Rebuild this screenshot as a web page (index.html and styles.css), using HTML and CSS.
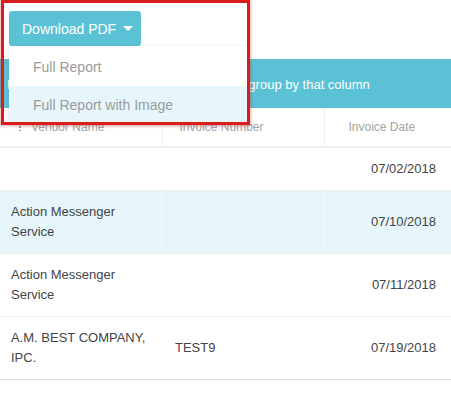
FILE: index.html
```html
<!DOCTYPE html>
<html>
<head>
<meta charset="utf-8">
<link rel="stylesheet" href="styles.css">
</head>
<body>
<div class="page">
  <div class="toolbar">
    <div class="dropdown">
      <button class="btn">Download PDF<span class="caret"></span></button>
      <ul class="menu">
        <li class="menu-item">Full Report</li>
        <li class="menu-item active">Full Report with Image</li>
      </ul>
    </div>
  </div>
  <div class="group-bar">Drag a column header and drop it here to group by that column</div>
  <table class="grid">
    <colgroup><col class="c1"><col class="c2"><col class="c3"></colgroup>
    <thead>
      <tr>
        <th class="h1"><span class="handle"></span>Vendor Name</th>
        <th class="h2">Invoice Number</th>
        <th class="h3">Invoice Date</th>
      </tr>
    </thead>
    <tbody>
      <tr><td class="d1"></td><td class="d2"></td><td class="d3">07/02/2018</td></tr>
      <tr class="alt"><td class="d1">Action Messenger Service</td><td class="d2"></td><td class="d3">07/10/2018</td></tr>
      <tr><td class="d1">Action Messenger Service</td><td class="d2"></td><td class="d3">07/11/2018</td></tr>
      <tr class="last"><td class="d1">A.M. BEST COMPANY, IPC.</td><td class="d2">TEST9</td><td class="d3">07/19/2018</td></tr>
    </tbody>
  </table>
  <div class="highlight"></div>
</div>
</body>
</html>
```

FILE: styles.css
```css
html, body {
  margin: 0;
  padding: 0;
  background: #fff;
  font-family: "Liberation Sans", Arial, sans-serif;
}
.page {
  position: relative;
  width: 451px;
  height: 400px;
  overflow: hidden;
}
.toolbar {
  height: 48px;
  padding: 11px 0 0 9px;
}
.dropdown {
  position: relative;
  display: inline-block;
}
.btn {
  display: flex;
  align-items: center;
  height: 35px;
  width: 132px;
  padding: 0 0 0 13px;
  margin: 0;
  border: none;
  border-radius: 3px;
  background: #5bc2d6;
  color: #fff;
  font-family: "Liberation Sans", Arial, sans-serif;
  font-size: 14px;
  box-sizing: border-box;
}
.caret {
  display: inline-block;
  width: 0;
  height: 0;
  margin-left: 7px;
  border-left: 5px solid transparent;
  border-right: 5px solid transparent;
  border-top: 5px solid #fff;
}
.menu {
  position: absolute;
  z-index: 5;
  top: 35px;
  left: 0;
  width: 238px;
  margin: 0;
  padding: 2px 0 0;
  list-style: none;
  background: #fff;
  box-shadow: 0 1px 4px rgba(0,0,0,0.12);
}
.menu-item {
  height: 38px;
  line-height: 38px;
  padding-left: 24px;
  font-size: 14px;
  color: #9a9a9a;
}
.menu-item.active {
  background: #e7f6fa;
}
.group-bar {
  height: 49px;
  line-height: 51px;
  padding-left: 7px;
  background: #5bc2d6;
  color: #fff;
  font-size: 13px;
  white-space: nowrap;
}
.grid {
  width: 451px;
  table-layout: fixed;
  border-collapse: collapse;
}
.c1 { width: 162px; }
.c2 { width: 162px; }
.c3 { width: 127px; }
th {
  height: 38px;
  padding: 0;
  font-size: 12px;
  font-weight: normal;
  color: #a3a3a3;
  text-align: left;
  border-right: 1px solid #f0f0f0;
  border-bottom: 2px solid #eeeeee;
}
.h1 { padding-left: 19px; }
.h2 { padding-left: 17px; }
.h3 { padding-left: 24px; border-right: none; }
.handle {
  display: inline-block;
  width: 2px;
  height: 6px;
  margin-right: 10px;
  vertical-align: middle;
  background: radial-gradient(circle, #999 0.9px, transparent 1.1px) 0 0 / 2px 4px repeat-y;
}
td {
  padding: 11px 12px 11px 11px;
  font-size: 13px;
  line-height: 20px;
  color: #444;
  border-bottom: 1px solid #eeeeee;
  vertical-align: middle;
}
.d2 { padding-left: 13px; }
.d3 { text-align: right; padding-right: 15px; }
tr.alt td { background: #e6f6fa; }
tr.alt td.d1, tr.alt td.d2 { box-shadow: inset -1px 0 0 #f2fafc; }
tr.last td { border-bottom-color: #dddddd; }
.highlight {
  position: absolute;
  z-index: 10;
  left: 1px;
  top: 0;
  width: 249px;
  height: 125px;
  box-sizing: border-box;
  border: 3px solid #dc1c1c;
  box-shadow: 0 0 3px 1px rgba(200, 30, 30, 0.35);
  pointer-events: none;
}
```
